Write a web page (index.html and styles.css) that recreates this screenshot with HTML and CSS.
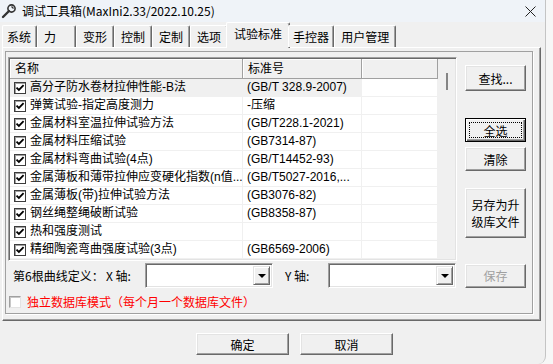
FILE: index.html
```html
<!DOCTYPE html>
<html lang="zh-CN">
<head>
  <meta charset="UTF-8">
  <title>调试工具箱</title>
  <link rel="stylesheet" href="styles.css">
</head>
<body>
  <div class="window">
    <!-- Barre de titre -->
    <div class="titlebar">
      <svg class="title-icon" width="16" height="16" viewBox="0 0 16 16">
        <circle cx="10.5" cy="5.5" r="3.6" fill="none" stroke="#333" stroke-width="1.6"/>
        <path d="M8 8 L2 14" stroke="#333" stroke-width="2.4" stroke-linecap="round"/>
        <path d="M10.5 3.5 L12.5 5.5" stroke="#333" stroke-width="1.2"/>
      </svg>
      <span class="title-text">调试工具箱(MaxIni2.33/2022.10.25)</span>
      <span class="close-btn">
        <svg width="11" height="11" viewBox="0 0 11 11">
          <path d="M0.5 0.5 L10.5 10.5 M10.5 0.5 L0.5 10.5" stroke="#222" stroke-width="1"/>
        </svg>
      </span>
    </div>

    <!-- Onglets -->
    <div class="tabs">
      <div class="tab tab-first">系统</div>
      <div class="tab tab-force">力</div>
      <div class="tab">变形</div>
      <div class="tab">控制</div>
      <div class="tab">定制</div>
      <div class="tab">选项</div>
      <div class="tab active">试验标准</div>
      <div class="tab tab-narrow">手控器</div>
      <div class="tab">用户管理</div>
    </div>

    <div class="panel">
      <div class="page">
        <div class="top">
          <!-- Liste des normes -->
          <div class="list">
            <div class="table">
              <div class="grid head">
                <div class="hcell">名称</div>
                <div class="hcell">标准号</div>
                <div class="hcell"></div>
              </div>
              <div class="grid row hot">
                <div class="cell"><span class="chk"><svg width="10" height="10" viewBox="0 0 10 10"><path d="M1.5 4.6 L3.9 7 L8.6 2.2" fill="none" stroke="#000" stroke-width="1.8"/></svg></span>高分子防水卷材拉伸性能-B法</div>
                <div class="cell">(GB/T 328.9-2007)</div>
                <div class="cell"></div>
              </div>
              <div class="grid row">
                <div class="cell"><span class="chk"><svg width="10" height="10" viewBox="0 0 10 10"><path d="M1.5 4.6 L3.9 7 L8.6 2.2" fill="none" stroke="#000" stroke-width="1.8"/></svg></span>弹簧试验-指定高度测力</div>
                <div class="cell">-压缩</div>
                <div class="cell"></div>
              </div>
              <div class="grid row">
                <div class="cell"><span class="chk"><svg width="10" height="10" viewBox="0 0 10 10"><path d="M1.5 4.6 L3.9 7 L8.6 2.2" fill="none" stroke="#000" stroke-width="1.8"/></svg></span>金属材料室温拉伸试验方法</div>
                <div class="cell">(GB/T228.1-2021)</div>
                <div class="cell"></div>
              </div>
              <div class="grid row">
                <div class="cell"><span class="chk"><svg width="10" height="10" viewBox="0 0 10 10"><path d="M1.5 4.6 L3.9 7 L8.6 2.2" fill="none" stroke="#000" stroke-width="1.8"/></svg></span>金属材料压缩试验</div>
                <div class="cell">(GB7314-87)</div>
                <div class="cell"></div>
              </div>
              <div class="grid row">
                <div class="cell"><span class="chk"><svg width="10" height="10" viewBox="0 0 10 10"><path d="M1.5 4.6 L3.9 7 L8.6 2.2" fill="none" stroke="#000" stroke-width="1.8"/></svg></span>金属材料弯曲试验(4点)</div>
                <div class="cell">(GB/T14452-93)</div>
                <div class="cell"></div>
              </div>
              <div class="grid row">
                <div class="cell"><span class="chk"><svg width="10" height="10" viewBox="0 0 10 10"><path d="M1.5 4.6 L3.9 7 L8.6 2.2" fill="none" stroke="#000" stroke-width="1.8"/></svg></span>金属薄板和薄带拉伸应变硬化指数(n值...</div>
                <div class="cell">(GB/T5027-2016,...</div>
                <div class="cell"></div>
              </div>
              <div class="grid row">
                <div class="cell"><span class="chk"><svg width="10" height="10" viewBox="0 0 10 10"><path d="M1.5 4.6 L3.9 7 L8.6 2.2" fill="none" stroke="#000" stroke-width="1.8"/></svg></span>金属薄板(带)拉伸试验方法</div>
                <div class="cell">(GB3076-82)</div>
                <div class="cell"></div>
              </div>
              <div class="grid row">
                <div class="cell"><span class="chk"><svg width="10" height="10" viewBox="0 0 10 10"><path d="M1.5 4.6 L3.9 7 L8.6 2.2" fill="none" stroke="#000" stroke-width="1.8"/></svg></span>钢丝绳整绳破断试验</div>
                <div class="cell">(GB8358-87)</div>
                <div class="cell"></div>
              </div>
              <div class="grid row">
                <div class="cell"><span class="chk"><svg width="10" height="10" viewBox="0 0 10 10"><path d="M1.5 4.6 L3.9 7 L8.6 2.2" fill="none" stroke="#000" stroke-width="1.8"/></svg></span>热和强度测试</div>
                <div class="cell"></div>
                <div class="cell"></div>
              </div>
              <div class="grid row">
                <div class="cell"><span class="chk"><svg width="10" height="10" viewBox="0 0 10 10"><path d="M1.5 4.6 L3.9 7 L8.6 2.2" fill="none" stroke="#000" stroke-width="1.8"/></svg></span>精细陶瓷弯曲强度试验(3点)</div>
                <div class="cell">(GB6569-2006)</div>
                <div class="cell"></div>
              </div>
            </div>
            <div class="scroll"><div class="thumb"></div></div>
          </div>

          <!-- Boutons de droite -->
          <div class="side">
            <button class="btn btn-find">查找...</button>
            <button class="btn btn-default btn-all"><span class="focus">全选</span></button>
            <button class="btn btn-clear">清除</button>
            <button class="btn btn-export">另存为升<br>级库文件</button>
          </div>
        </div>

        <!-- Définition de la 6e courbe -->
        <div class="curve-row">
          <span class="lbl lbl-curve">第6根曲线定义：</span>
          <span class="lbl lbl-x">X 轴:</span>
          <div class="combo"><span class="combo-arrow"></span></div>
          <span class="lbl lbl-y">Y 轴:</span>
          <div class="combo"><span class="combo-arrow"></span></div>
          <button class="btn btn-save" disabled>保存</button>
        </div>

        <div class="check-row">
          <span class="chk chk-off"></span>
          <span class="red">独立数据库模式（每个月一个数据库文件）</span>
        </div>
      </div>
    </div>

    <div class="dialog-buttons">
      <button class="btn btn-dialog">确定</button>
      <button class="btn btn-dialog">取消</button>
    </div>
  </div>
</body>
</html>
```

FILE: styles.css
```css
/* Styles généraux */
* {
  box-sizing: border-box;
}
body {
  margin: 0;
  background-color: #f7f7f7;
  font-family: "Liberation Sans", "Noto Sans CJK SC", sans-serif;
  font-size: 12px;
  color: #000;
}
.window {
  width: 546px;
  height: 364px;
  background-color: #f0f0f0;
  border-right: 1px solid #c4c4c4;
  border-bottom-right-radius: 8px;
  overflow: hidden;
}

/* Barre de titre */
.titlebar {
  height: 22px;
  display: flex;
  align-items: center;
  padding-left: 1px;
  background-color: #eff3f8;
}
.title-text {
  margin-left: 5px;
  font-family: "Noto Sans CJK SC", sans-serif;
  line-height: 16px;
}
.close-btn {
  margin-left: auto;
  width: 30px;
  display: flex;
  justify-content: center;
}

/* Onglets */
.tabs {
  position: relative;
  z-index: 1;
  height: 25px;
  display: flex;
  align-items: flex-end;
  padding-left: 2px;
}
.tab {
  height: 22px;
  padding: 0 6px;
  line-height: 21px;
  font-family: "Noto Sans CJK SC", sans-serif;
  background-color: #f0f0f0;
  border-top: 1px solid #fff;
  border-left: 1px solid #fff;
  border-right: 1px solid #696969;
  box-shadow: inset -1px 0 #a0a0a0;
  border-radius: 2px 2px 0 0;
}
.tab-first {
  padding: 0 5px 0 4px;
}
.tab-force {
  padding-right: 19px;
}
.tab-narrow {
  padding: 0 4px;
}
.tab.active {
  height: 26px;
  margin: 0 -2px -1px -2px;
  padding: 0 7px 3px 7px;
  line-height: 21px;
}

/* Panneau */
.panel {
  margin-left: 2px;
  width: 539px;
  height: 274px;
  padding: 3px 0 0 2px;
  border: 1px solid;
  border-color: #fff #696969 #696969 #fff;
  box-shadow: inset -1px -1px #a0a0a0;
}
.page {
  width: 528px;
  height: 263px;
  border: 1px solid #a0a0a0;
  box-shadow: 1px 1px 0 #fff;
}
.top {
  display: flex;
  height: 209px;
}

/* Liste */
.list {
  margin: 5px 0 0 2px;
  width: 449px;
  height: 204px;
  padding: 1px;
  display: flex;
  background-color: #fff;
  border: 1px solid;
  border-color: #a0a0a0 #fff #fff #a0a0a0;
  box-shadow: inset 1px 1px #696969, inset -1px -1px #e3e3e3;
}
.table {
  width: 428px;
}
.grid {
  display: grid;
  grid-template-columns: 233px 119px 76px;
}
.head {
  height: 20px;
}
.hcell {
  padding-left: 5px;
  line-height: 18px;
  background-color: #f0f0f0;
  border-right: 1px solid #a0a0a0;
  border-bottom: 1px solid #a0a0a0;
  box-shadow: inset 1px 1px #fff;
  font-family: "Noto Sans CJK SC", sans-serif;
}
.row {
  height: 18px;
}
.cell {
  display: flex;
  align-items: center;
  padding-left: 4px;
  white-space: nowrap;
  overflow: hidden;
  border-right: 1px solid #f0f0f0;
  border-bottom: 1px solid #f0f0f0;
  line-height: 17px;
}
.row.hot .cell:not(:last-child) {
  background-color: #f0f0f0;
}
.chk {
  width: 12px;
  height: 12px;
  margin-right: 4px;
  flex-shrink: 0;
  display: flex;
  align-items: center;
  justify-content: center;
  background-color: #fff;
  border: 1px solid #3c3c3c;
  box-shadow: inset 1px 1px #a0a0a0;
}
.chk-off {
  margin-right: 6px;
  border-color: #a0a0a0 #e3e3e3 #e3e3e3 #a0a0a0;
  box-shadow: inset 1px 1px #c8c8c8;
}
.scroll {
  width: 17px;
  padding: 14px 0 0 8px;
  background-color: #f0f0f0;
}
.thumb {
  width: 2px;
  height: 17px;
  background-color: #858585;
}

/* Boutons */
.btn {
  display: flex;
  align-items: center;
  justify-content: center;
  padding: 0;
  font: inherit;
  font-family: "Noto Sans CJK SC", sans-serif;
  color: #000;
  background-color: #f0f0f0;
  border: 1px solid;
  border-color: #fff #696969 #696969 #fff;
  box-shadow: inset -1px -1px #a0a0a0, inset 1px 1px #e3e3e3;
}
.btn-default {
  border-color: #000;
  box-shadow: inset 1px 1px #fff, inset -1px -1px #696969, inset -2px -2px #a0a0a0;
  padding: 3px;
}
.focus {
  flex: 1;
  align-self: stretch;
  display: flex;
  align-items: center;
  justify-content: center;
  border: 1px dotted #000;
}
.side {
  margin-left: 8px;
  padding-top: 13px;
  width: 61px;
}
.side .btn {
  width: 61px;
}
.btn-find {
  height: 26px;
}
.btn-all {
  margin-top: 27px;
  height: 24px;
}
.btn-clear {
  margin-top: 5px;
  height: 24px;
}
.btn-export {
  margin-top: 17px;
  height: 50px;
  line-height: 17px;
}

/* Ligne de la 6e courbe */
.curve-row {
  margin-top: 2px;
  height: 25px;
  display: flex;
  align-items: center;
  padding-left: 7px;
}
.lbl {
  font-family: "Noto Sans CJK SC", sans-serif;
  white-space: nowrap;
}
.lbl-curve {
  width: 93px;
}
.lbl-x {
  width: 39px;
}
.lbl-y {
  margin-left: 12px;
  width: 43px;
}
.combo {
  width: 128px;
  height: 25px;
  padding: 2px;
  display: flex;
  justify-content: flex-end;
  background-color: #fff;
  border: 1px solid;
  border-color: #a0a0a0 #fff #fff #a0a0a0;
  box-shadow: inset 1px 1px #696969, inset -1px -1px #e3e3e3;
}
.combo-arrow {
  width: 17px;
  display: flex;
  align-items: center;
  justify-content: center;
  background-color: #f0f0f0;
  border: 1px solid;
  border-color: #e3e3e3 #696969 #696969 #e3e3e3;
  box-shadow: inset 1px 1px #fff, inset -1px -1px #a0a0a0;
}
.combo-arrow::after {
  content: "";
  border-left: 4px solid transparent;
  border-right: 4px solid transparent;
  border-top: 4px solid #000;
}
.btn-save {
  margin-left: 9px;
  width: 61px;
  height: 24px;
  color: #a0a0a0;
}

/* Case à cocher du mode base */
.check-row {
  margin-top: 8px;
  height: 12px;
  display: flex;
  align-items: center;
  padding-left: 3px;
}
.red {
  color: #ff0000;
  font-family: "Noto Sans CJK SC", sans-serif;
  line-height: 14px;
}

/* Boutons du bas */
.dialog-buttons {
  margin-top: 12px;
  padding-left: 196px;
  display: flex;
  gap: 11px;
}
.btn-dialog {
  width: 93px;
  height: 22px;
}
```
